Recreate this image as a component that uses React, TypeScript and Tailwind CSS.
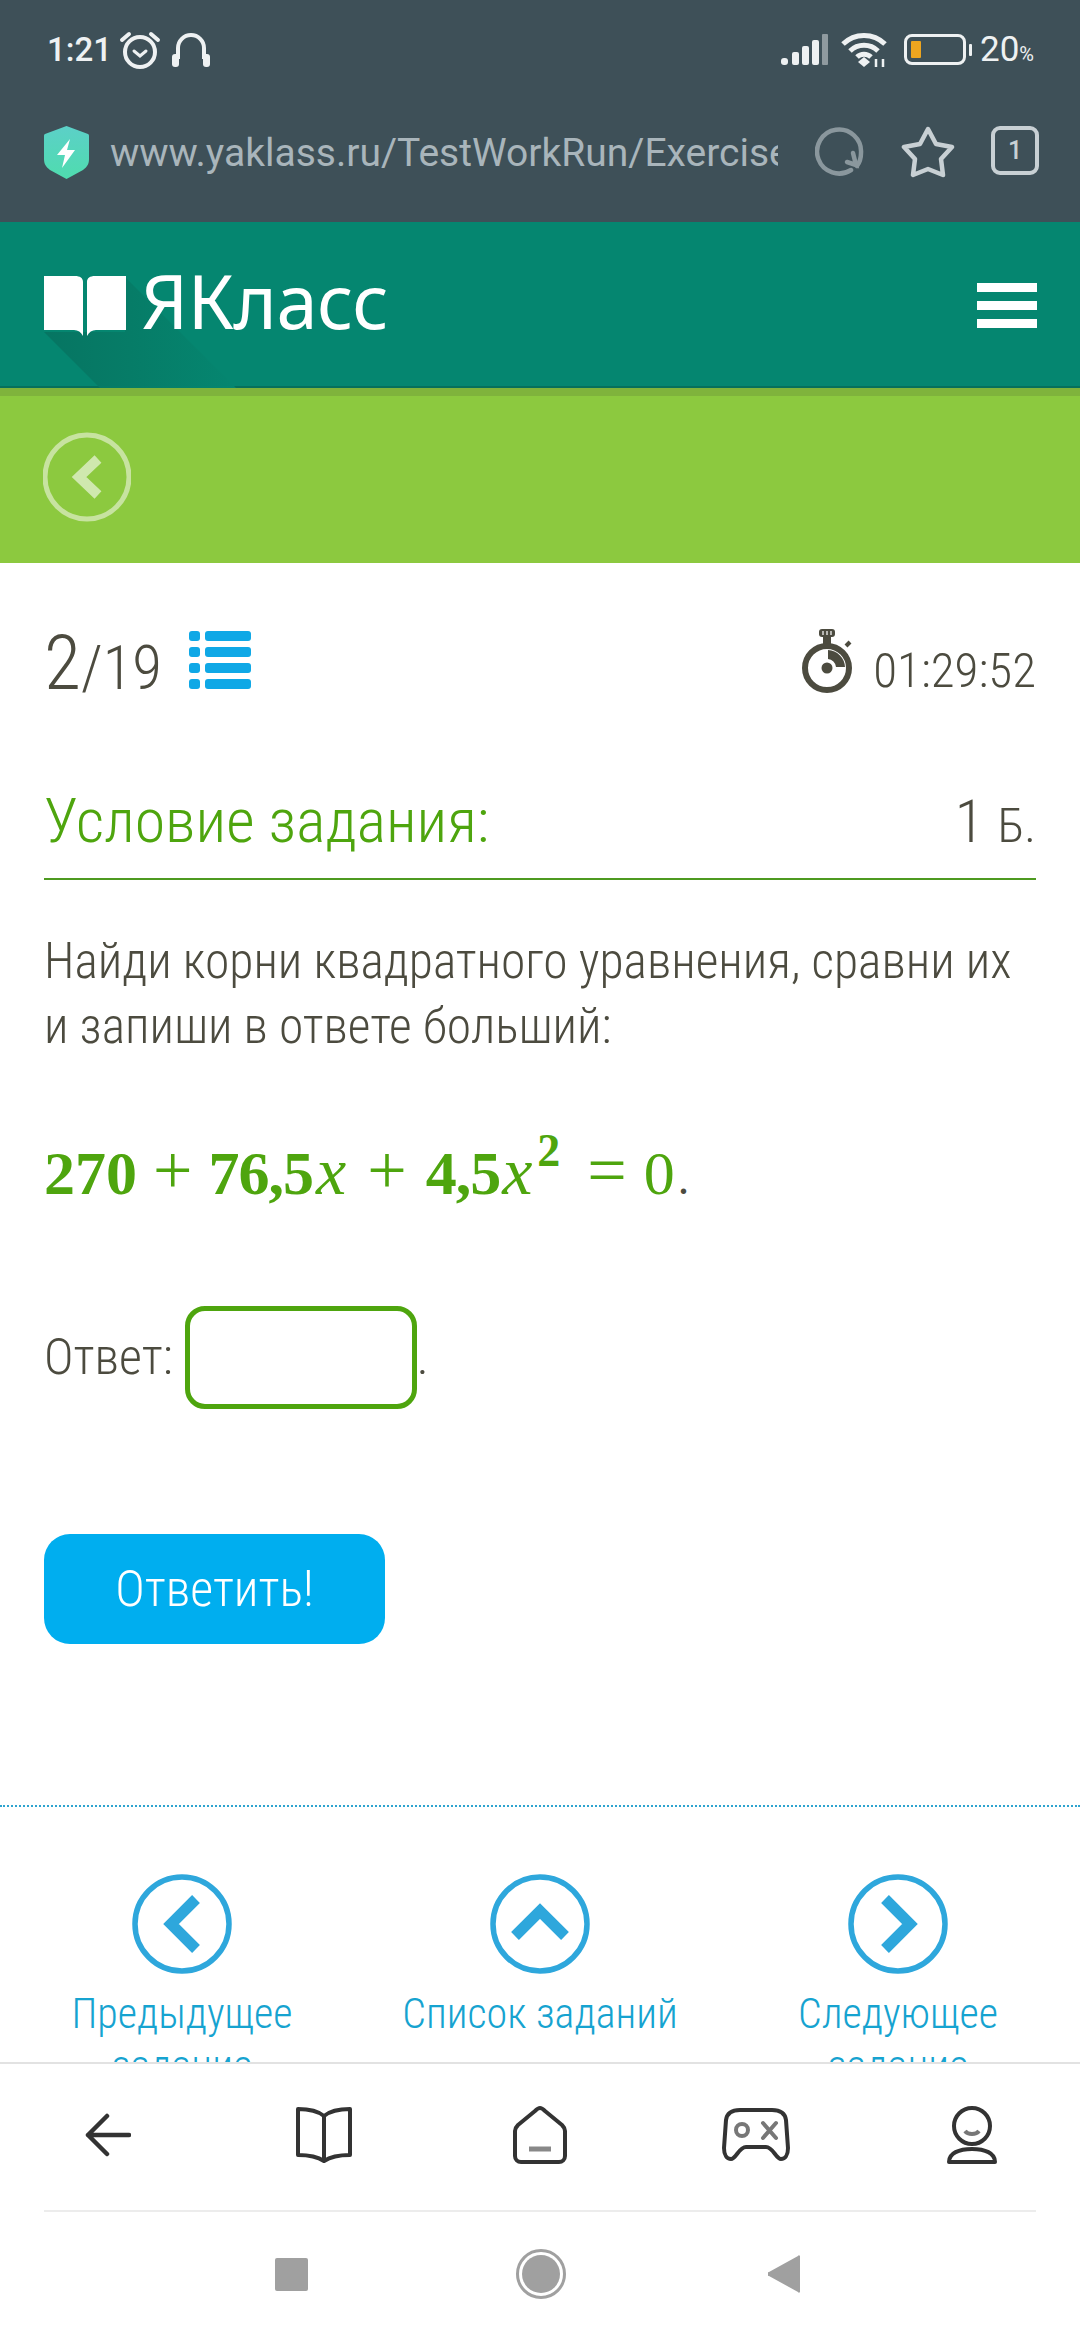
const Light = "font-['Roboto',sans-serif] font-light font-stretch-condensed";

const StatusBar = () => (
  <div className="flex h-[100px] items-center justify-between pb-[1px] pl-[47px] pr-[46px] text-[#eef1f2]">
    <div className="flex items-center">
      <span className="font-['Roboto',sans-serif] text-[33px] font-medium leading-none">1:21</span>
      <svg className="ml-[7px] h-[38px] w-[42px]" viewBox="0 0 42 38" fill="none" stroke="currentColor" strokeWidth="4" strokeLinecap="round">
        <circle cx="21" cy="21" r="15" />
        <path d="M15 20l6 5 6-5" strokeWidth="3" />
        <path d="M3 9l7-6M39 9l-7-6" />
      </svg>
      <svg className="ml-[10px] h-[38px] w-[40px]" viewBox="0 0 40 38" fill="none" stroke="currentColor" strokeWidth="4">
        <path d="M7 28V17a13 13 0 0 1 26 0v11" />
        <rect x="1" y="23" width="7" height="13" rx="3" fill="currentColor" stroke="none" />
        <rect x="32" y="23" width="7" height="13" rx="3" fill="currentColor" stroke="none" />
      </svg>
    </div>
    <div className="flex items-center">
      <svg className="h-[32px] w-[48px]" viewBox="0 0 48 32" fill="currentColor">
        <rect x="0" y="24" width="7" height="7" rx="3" />
        <rect x="11" y="18" width="7" height="13" rx="2" />
        <rect x="21" y="12" width="7" height="19" rx="2" />
        <rect x="31" y="6" width="7" height="25" rx="2" />
        <rect x="41" y="0" width="6" height="31" rx="1" fill="#8f9a9f" />
      </svg>
      <svg className="ml-[12px] h-[36px] w-[48px]" viewBox="0 0 48 36" fill="none" stroke="currentColor" strokeWidth="5">
        <path d="M2 12a30 30 0 0 1 42 0M9 19a20 20 0 0 1 28 0M16 25a10 10 0 0 1 14 0" />
        <path d="M17 30l6-5 6 5-6 5z" fill="currentColor" stroke="none" />
        <path d="M35 27v8M42 27v8" strokeWidth="2.5" />
      </svg>
      <div className="ml-[15px] flex h-[31px] w-[62px] items-center rounded-[8px] border-[3.5px] border-[#eef1f2] pl-[4px]">
        <div className="h-[17px] w-[10px] rounded-[1px] bg-[#eda51f]" />
      </div>
      <div className="ml-[3px] h-[12px] w-[3px] rounded-[1px] bg-[#eef1f2]" />
      <span className="ml-[8px] flex items-baseline font-['Roboto',sans-serif] leading-none">
        <span className="text-[35px]">20</span>
        <span className="text-[20px]">%</span>
      </span>
    </div>
  </div>
);

const UrlBar = () => (
  <div className="flex h-[122px] items-start pl-[43px] pt-[26px]">
    <svg className="h-[53px] w-[47px]" viewBox="0 0 47 53">
      <defs>
        <linearGradient id="shield" x1="0" y1="0" x2="0" y2="1">
          <stop offset="0" stopColor="#5cd0c8" />
          <stop offset="1" stopColor="#4fdcae" />
        </linearGradient>
      </defs>
      <path d="M23.5 0L45 8a2 2 0 0 1 1 2v23c0 5-2 8-6 11L23.5 53 7 44c-4-3-6-6-6-11V10a2 2 0 0 1 1-2z" fill="url(#shield)" />
      <path d="M27 13L14 29h8l-3 13 13-18h-8z" fill="#fff" />
    </svg>
    <div className="ml-[20px] mt-[2px] w-[668px] overflow-hidden whitespace-nowrap font-['Roboto',sans-serif] text-[39px] leading-[50px] text-[#a9b5bb]">
      www.yaklass.ru/TestWorkRun/Exercise
    </div>
    <svg className="ml-[37px] h-[50px] w-[50px]" viewBox="0 0 50 50" fill="none" stroke="#8a979d" strokeWidth="4.5" strokeLinecap="round">
      <path d="M36 44a22 22 0 1 1 10-17c0 5-1 9-4 13" />
      <path d="M38 27l3 12-9-3" />
    </svg>
    <svg className="ml-[36px] h-[52px] w-[54px]" viewBox="0 0 54 52" fill="none" stroke="#c8d0d4" strokeWidth="4.5" strokeLinejoin="round">
      <path d="M27 3l8 15 16 3-11 12 2 16-15-6-15 6 2-16L3 21l16-3z" />
    </svg>
    <div className="ml-[36px] flex h-[49px] w-[48px] items-center justify-center rounded-[9px] border-[4px] border-[#c8d0d4] font-['Roboto',sans-serif] text-[25px] font-medium text-[#c8d0d4]">
      1
    </div>
  </div>
);

const SiteHeader = () => (
  <div className="relative flex h-[166px] items-center justify-between overflow-hidden bg-[#058670] pl-[44px] pr-[43px] shadow-[inset_0_-2px_0_#06705c]">
    <svg className="absolute left-[44px] top-[55px] h-[111px] w-[260px]" viewBox="0 0 260 111">
      <defs>
        <linearGradient id="shadow" x1="0" y1="0" x2="1" y2="0">
          <stop offset="0" stopColor="#067562" />
          <stop offset="0.45" stopColor="#067c67" />
          <stop offset="1" stopColor="#058670" />
        </linearGradient>
      </defs>
      <path d="M0 55h81V0l111 111H56z" fill="url(#shadow)" />
    </svg>
    <div className="relative flex items-center">
      <svg className="mt-[2px] h-[60px] w-[82px]" viewBox="0 0 82 60" fill="#fff">
        <path d="M0 0h31c5 0 8 2 8 6v54c-2-4-5-6-9-6H0z" />
        <path d="M82 0H51c-5 0-8 2-8 6v54c2-4 5-6 9-6h30z" />
      </svg>
      <span className="ml-[15px] mb-[8px] font-['Noto_Sans',sans-serif] text-[74px] leading-none tracking-[-0.5px] text-white">ЯКласс</span>
    </div>
    <div className="flex w-[60px] flex-col gap-[9px]">
      <div className="h-[9px] bg-white" />
      <div className="h-[9px] bg-white" />
      <div className="h-[9px] bg-white" />
    </div>
  </div>
);

const BackBand = () => (
  <div className="flex h-[175px] items-start border-t-[8px] border-[#7fb33c] bg-[#8cc93f] pl-[43px] pt-[36px]">
    <svg className="h-[90px] w-[88px]" viewBox="0 0 88 90" fill="none">
      <circle cx="44" cy="45" r="42" stroke="#c7e3a0" strokeWidth="5" />
      <path d="M55 27L36 45l19 18" stroke="#cfe8ae" strokeWidth="10" />
    </svg>
  </div>
);

const ListIcon = () => (
  <svg className="ml-[27px] h-[58px] w-[62px]" viewBox="0 0 62 58" fill="#0fa8e6">
    <rect x="0" y="0" width="11" height="10" rx="3" />
    <rect x="0" y="16" width="11" height="10" rx="3" />
    <rect x="0" y="32" width="11" height="10" rx="3" />
    <rect x="0" y="48" width="11" height="10" rx="3" />
    <rect x="16" y="0" width="46" height="10" rx="3" />
    <rect x="16" y="16" width="46" height="10" rx="3" />
    <rect x="16" y="32" width="46" height="10" rx="3" />
    <rect x="16" y="48" width="46" height="10" rx="3" />
  </svg>
);

const Stopwatch = () => (
  <svg className="mb-[2px] h-[66px] w-[54px]" viewBox="0 0 54 66" fill="none">
    <rect x="17" y="0" width="16" height="8" rx="3" fill="#4c4b3f" />
    <path d="M21 2v4M25 2v4M29 2v4" stroke="#fff" strokeWidth="1.2" />
    <rect x="21" y="7" width="8" height="8" fill="#4c4b3f" />
    <path d="M44 17l4-4" stroke="#4c4b3f" strokeWidth="4" />
    <circle cx="25" cy="39" r="22" stroke="#4c4b3f" strokeWidth="6" />
    <circle cx="25" cy="39" r="5.5" fill="#4c4b3f" />
    <path d="M26 21a18 18 0 0 1 17 17h-9a9 9 0 0 0-8-8z" fill="#4c4b3f" />
  </svg>
);

const NavLink = ({ d, lines }: { d: string; lines: string[] }) => (
  <div className="flex w-[300px] flex-col items-center">
    <svg className="h-[100px] w-[100px]" viewBox="0 0 100 100" fill="none">
      <circle cx="50" cy="50" r="47" stroke="#2ea7dc" strokeWidth="5.5" />
      <path d={d} stroke="#2ea7dc" strokeWidth="11" />
    </svg>
    <div className={`mt-[14px] text-center text-[42px] leading-[52px] text-[#16a3d0] ${Light}`}>
      {lines.map((line) => (
        <div key={line}>{line}</div>
      ))}
    </div>
  </div>
);

const Formula = () => (
  <div className="mt-[64px] flex h-[100px] items-baseline font-['Liberation_Serif',serif] text-[62px] font-normal leading-[100px] text-[#4ea50e] [font-stretch:normal]">
    <span className="font-bold">270</span>
    <span className="ml-[16px] mr-[16px] text-[70px] leading-none">+</span>
    <span className="font-bold tracking-[-1px]">76,5</span>
    <span className="ml-[3px] text-[68px] italic leading-none">x</span>
    <span className="ml-[21px] mr-[19px] text-[70px] leading-none">+</span>
    <span className="font-bold tracking-[-1px]">4,5</span>
    <span className="ml-[2px] text-[68px] italic leading-none">x</span>
    <sup className="-top-[28px] ml-[5px] text-[46px] font-bold leading-none">2</sup>
    <span className="ml-[27px] mr-[17px] text-[70px] leading-none">=</span>
    <span>0</span>
    <span className="ml-[3px] text-[46px] leading-none text-[#4c4b3f]">.</span>
  </div>
);

const Content = () => (
  <div className="flex-1 overflow-hidden bg-white text-[#4c4b3f]">
    <div className={`px-[44px] ${Light}`}>
      <div className="mt-[62px] flex h-[76px] justify-between">
        <div className="flex items-baseline">
          <span className="text-[76px] leading-[76px]">2</span>
          <span className="text-[61px] leading-[76px]">/19</span>
          <ListIcon />
        </div>
        <div className="flex items-center">
          <Stopwatch />
          <span className="ml-[17px] mt-[16px] text-[49px] leading-[76px]">01:29:52</span>
        </div>
      </div>
      <div className="mt-[89px] flex items-baseline justify-between border-b-2 border-[#4e9a20] pb-[21px]">
        <span className="text-[62px] leading-[62px] text-[#4ea50e]">Условие задания:</span>
        <span className="text-[60px] leading-[62px]">1 <span className="text-[49px]">Б.</span></span>
      </div>
      <p className="mt-[49px] text-[49.5px] leading-[65px]">
        Найди корни квадратного уравнения, сравни их
        <br />
        и запиши в ответе больший:
      </p>
      <Formula />
      <div className="mt-[83px] flex items-center text-[50px] leading-[65px]">
        <span>Ответ:</span>
        <div className="ml-[12px] h-[103px] w-[232px] rounded-[20px] border-[5px] border-[#4ea50e]" />
        <span>.</span>
      </div>
      <div className="mt-[125px] flex h-[110px] w-[341px] items-center justify-center rounded-[26px] bg-[#00aeef] text-[50px] text-white">
        Ответить!
      </div>
    </div>
    <div className="mt-[161px] border-t-2 border-dotted border-[#2ea4cf]" />
    <div className="mt-[67px] flex justify-between px-[32px]">
      <NavLink d="M64 25L39 50l25 25" lines={["Предыдущее", "задание"]} />
      <NavLink d="M25 62l25-25 25 25" lines={["Список заданий"]} />
      <NavLink d="M37 25l25 25-25 25" lines={["Следующее", "задание"]} />
    </div>
  </div>
);

const BottomBar = () => (
  <div className="shrink-0 border-t-2 border-[#e2e2e2] bg-white">
    <div className="grid h-[146px] grid-cols-5 place-items-center pb-[4px] text-[#333]">
      <svg className="h-[44px] w-[46px]" viewBox="0 0 46 44" fill="none" stroke="currentColor" strokeWidth="4.5" strokeLinecap="round" strokeLinejoin="round">
        <path d="M22 3L3 22l19 19M3 22h41" />
      </svg>
      <svg className="h-[56px] w-[56px]" viewBox="0 0 56 56" fill="none" stroke="currentColor" strokeWidth="4" strokeLinejoin="round">
        <path d="M28 9C22 4 12 2 2 2v46c10 0 20 2 26 6 6-4 16-6 26-6V2C44 2 34 4 28 9zM28 9v45" />
      </svg>
      <svg className="h-[58px] w-[58px]" viewBox="0 0 58 58" fill="none" stroke="currentColor" strokeWidth="4" strokeLinejoin="round">
        <path d="M29 2c2 0 3 1 5 3l17 14c2 2 3 3 3 6v25a6 6 0 0 1-6 6H10a6 6 0 0 1-6-6V25c0-3 1-4 3-6L24 5c2-2 3-3 5-3z" />
        <path d="M18 43h22" stroke="#888" strokeWidth="5" />
      </svg>
      <svg className="h-[54px] w-[68px]" viewBox="0 0 68 54" fill="none" stroke="currentColor" strokeWidth="4" strokeLinecap="round">
        <path d="M18 2h32c8 0 13 3 14 10l2 28c0 7-3 11-7 11-5 0-8-12-15-12H24c-7 0-10 12-15 12-4 0-7-4-7-11l2-28C5 5 10 2 18 2z" />
        <circle cx="20" cy="22" r="6" stroke="#777" />
        <path d="M41 15l13 15M54 15L41 30" stroke="#777" />
      </svg>
      <svg className="h-[58px] w-[50px]" viewBox="0 0 50 58" fill="none" stroke="currentColor" strokeWidth="4">
        <circle cx="25" cy="20" r="18" />
        <path d="M18 25c3 4 11 4 14 0" stroke="#777" />
        <path d="M2 56c0-9 10-13 23-13s23 4 23 13z" strokeLinejoin="round" />
      </svg>
    </div>
    <div className="mx-[44px] border-t-2 border-[#ececec]" />
    <div className="flex h-[128px] items-center pb-[4px] pl-[275px]">
      <div className="h-[33px] w-[33px] rounded-[2px] bg-[#a0a0a0]" />
      <div className="ml-[208px] flex h-[50px] w-[50px] items-center justify-center rounded-full border-[3px] border-[#a0a0a0]">
        <div className="h-[38px] w-[38px] rounded-full bg-[#a0a0a0]" />
      </div>
      <svg className="ml-[202px] h-[38px] w-[32px]" viewBox="0 0 32 38" fill="#a0a0a0">
        <path d="M30 1a1 1 0 0 1 2 1v34a1 1 0 0 1-2 1L1 21a2 2 0 0 1 0-4z" />
      </svg>
    </div>
  </div>
);

export default function App() {
  return (
    <div className="flex h-[2340px] w-[1080px] flex-col overflow-hidden bg-white">
      <div className="bg-[#3e5058]">
        <StatusBar />
        <UrlBar />
      </div>
      <SiteHeader />
      <BackBand />
      <Content />
      <BottomBar />
    </div>
  );
}
